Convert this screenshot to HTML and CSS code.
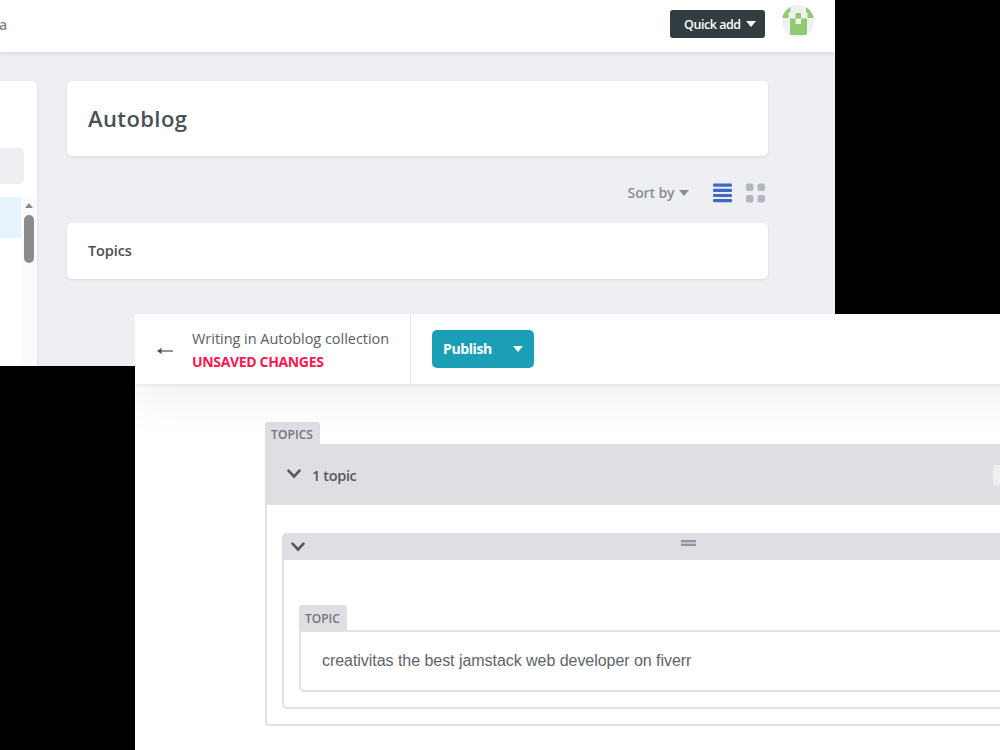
FILE: index.html
```
<!DOCTYPE html>
<html lang="en">
<head>
    <meta charset="UTF-8">
    <meta name="viewport" content="width=device-width, initial-scale=1.0">
    <title>Autoblog - Content Manager</title>
    <link rel="stylesheet" href="styles.css">
</head>
<body>
    <!-- Collection list window -->
    <div class="window collection-window">
        <header class="top-bar">
            <span class="nav-link">a</span>
            <button class="quick-add"><span class="quick-text">Quick add</span><i class="caret"></i></button>
            <svg class="avatar" width="32" height="32" viewBox="0 0 32 32">
                <clipPath id="round"><circle cx="16" cy="16" r="16"/></clipPath>
                <g clip-path="url(#round)">
                    <rect width="32" height="32" fill="#f0f0f0"/>
                    <path fill="#8fcc71" d="M0 2h8.500v5.500h-2v5.500H0zM24 2H32v11h-6.500V7.500H24zM13.500 8h5.500v5.500h6V30H8V13.500h5.500z"/>
                    <rect x="13.500" y="13.500" width="5.500" height="5.500" fill="#f0f0f0"/>
                </g>
            </svg>
        </header>
        <main class="collection-body">
            <aside class="sidebar">
                <div class="search"></div>
                <div class="side-list">
                    <div class="side-active"></div>
                    <div class="scrollbar">
                        <i class="scroll-up"></i>
                        <i class="scroll-thumb"></i>
                    </div>
                </div>
            </aside>
            <section class="entries">
                <div class="card title-card"><h1>Autoblog</h1></div>
                <div class="controls">
                    <span class="sort">Sort by</span><i class="caret sort-caret"></i>
                    <svg class="list-icon" width="19" height="20" viewBox="0 0 19 20" fill="#4268c5">
                        <rect y="0.500" width="19" height="3.200" rx="1"/>
                        <rect y="5.700" width="19" height="3.200" rx="1"/>
                        <rect y="10.900" width="19" height="3.200" rx="1"/>
                        <rect y="16.100" width="19" height="3.200" rx="1"/>
                    </svg>
                    <svg width="19" height="20" viewBox="0 0 19 20" fill="#b3b6c1">
                        <rect y="0.500" width="7.500" height="7.500" rx="2"/>
                        <rect x="11.500" y="0.500" width="7.500" height="7.500" rx="2"/>
                        <rect y="12" width="7.500" height="7.500" rx="2"/>
                        <rect x="11.500" y="12" width="7.500" height="7.500" rx="2"/>
                    </svg>
                </div>
                <div class="card entry-card"><h2>Topics</h2></div>
            </section>
        </main>
    </div>

    <!-- Entry editor window -->
    <div class="window editor-window">
        <header class="editor-bar">
            <a class="back">
                <svg class="back-arrow" width="16" height="10" viewBox="0 0 16 10">
                    <path d="M1.500 5H16" stroke="#53595d" stroke-width="1.300"/>
                    <path d="M0 5L5 1.700L4 5L5 8.300Z" fill="#43494d"/>
                </svg>
                <div>
                    <div class="writing">Writing in Autoblog collection</div>
                    <div class="unsaved">UNSAVED CHANGES</div>
                </div>
            </a>
            <button class="publish"><span class="publish-text">Publish</span><i class="caret"></i></button>
        </header>
        <main class="editor-body">
            <label class="field-label topics-label">TOPICS</label>
            <div class="list-field">
                <div class="list-bar">
                    <svg class="chevron" width="14" height="10" viewBox="0 0 14 10"><path d="M1.500 1.700L7 7.500L12.500 1.700"/></svg>
                    <span class="count">1 topic</span>
                    <span class="add-button"></span>
                </div>
                <div class="list-item">
                    <div class="item-bar">
                        <svg class="chevron" width="14" height="10" viewBox="0 0 14 10"><path d="M1.500 1.700L7 7.500L12.500 1.700"/></svg>
                        <i class="drag"></i>
                    </div>
                    <label class="field-label topic-label">TOPIC</label>
                    <div class="text-input"><span class="value">creativitas the best jamstack web developer on fiverr</span></div>
                </div>
            </div>
        </main>
    </div>
</body>
</html>
```
FILE: styles.css
```
* {
    box-sizing: border-box;
}
body {
    margin: 0;
    width: 1000px;
    height: 750px;
    position: relative;
    overflow: hidden;
    background: #000;
    font-family: "Open Sans", "Noto Sans", sans-serif;
    font-size: 14px;
    color: #4a5054;
}
h1, h2 {
    margin: 0;
}
button {
    border: none;
    font-family: inherit;
    color: #fff;
    display: flex;
    align-items: center;
    white-space: nowrap;
}
.window {
    position: absolute;
    overflow: hidden;
}
.caret {
    width: 0;
    height: 0;
    border: 5px solid transparent;
    border-top: 6px solid currentColor;
    border-bottom: 0;
}

/* Collection window */
.collection-window {
    left: 0;
    top: 0;
    width: 835px;
    height: 366px;
    background: #eeeff3;
}
.top-bar {
    height: 52px;
    padding-right: 21px;
    display: flex;
    align-items: flex-start;
    background: #fff;
    box-shadow: 0 1px 4px rgba(68, 74, 87, 0.16);
}
.nav-link {
    margin: 15px auto 0 -1px;
    font-weight: 600;
    color: #7f8590;
}
.quick-add {
    width: 95px;
    height: 28px;
    margin-top: 10px;
    padding: 0 0 0 14px;
    border-radius: 3px;
    background: #313d3e;
    font-size: 12.500px;
    font-weight: 600;
    gap: 5px;
}
.quick-text {
    letter-spacing: -0.450px;
}
.avatar {
    margin: 5px 0 0 17px;
}
.collection-body {
    display: flex;
    gap: 30.500px;
    padding-top: 29px;
}
.sidebar {
    width: 36.500px;
    height: 400px;
    padding-top: 67px;
    background: #fff;
    border-radius: 0 5px 0 0;
    box-shadow: 0 1px 3px rgba(68, 74, 87, 0.12);
}
.search {
    width: 24px;
    height: 36px;
    border-radius: 0 5px 5px 0;
    background: #eeeff3;
}
.side-list {
    display: flex;
    height: 240px;
    margin-top: 13px;
}
.side-active {
    width: 21px;
    height: 41px;
    background: #e6f3fd;
}
.scrollbar {
    flex: 1;
    display: flex;
    flex-direction: column;
    align-items: center;
    padding-top: 6px;
    background: #fbfbfb;
}
.scroll-up {
    border: 4.500px solid transparent;
    border-bottom: 5px solid #8a8a8a;
    border-top: 0;
}
.scroll-thumb {
    width: 10px;
    height: 48px;
    margin-top: 7px;
    border-radius: 5px;
    background: #8b8b8b;
}
.entries {
    width: 701px;
}
.card {
    display: flex;
    align-items: center;
    padding-left: 21px;
    background: #fff;
    border-radius: 5px;
    box-shadow: 0 1px 3px rgba(68, 74, 87, 0.13);
}
.title-card {
    height: 74.500px;
}
.title-card h1 {
    font-size: 22px;
    font-weight: 600;
    letter-spacing: 0.400px;
}
.controls {
    height: 67px;
    padding: 7px 3.500px 0 0;
    display: flex;
    align-items: center;
    justify-content: flex-end;
    color: #8a8d96;
}
.sort {
    font-size: 14px;
    font-weight: 600;
    letter-spacing: -0.100px;
}
.sort-caret {
    margin-left: 4px;
}
.list-icon {
    margin: 0 14px 0 24px;
}
.entry-card {
    height: 56.500px;
}
.entry-card h2 {
    font-size: 14.500px;
    font-weight: 600;
    letter-spacing: -0.100px;
}

/* Editor window */
.editor-window {
    left: 134.5px;
    top: 314px;
    width: 866px;
    height: 436px;
    background: #fff;
}
.editor-bar {
    position: relative;
    width: 930px;
    height: 69.500px;
    display: flex;
    align-items: center;
    background: #fff;
    box-shadow: 0 1px 3px rgba(40, 40, 40, 0.1), 0 18px 45px 0 rgba(0, 0, 0, 0.06);
}
.back {
    width: 276.500px;
    height: 100%;
    padding-left: 22.500px;
    display: flex;
    align-items: center;
    border-right: 1px solid #e6e6e9;
    white-space: nowrap;
}
.back-arrow {
    margin: 4px 19px 0 0;
}
.writing {
    line-height: 23px;
    padding-top: 2px;
    font-size: 14.500px;
    letter-spacing: -0.030px;
    color: #596066;
}
.unsaved {
    line-height: 23px;
    font-size: 14px;
    font-weight: 700;
    color: #fb1750;
    letter-spacing: -0.340px;
}
.publish {
    width: 102px;
    height: 38px;
    margin-left: 21px;
    padding: 0 11px 0 11px;
    justify-content: space-between;
    border-radius: 5px;
    background: #1a9fb6;
    font-size: 14px;
    font-weight: 700;
}
.publish-text {
    letter-spacing: -0.400px;
}
.editor-body {
    padding: 38.500px 0 0 130.500px;
}
.field-label {
    display: flex;
    align-items: center;
    padding: 1px 0 0 6px;
    border-radius: 3px 3px 0 0;
    background: #dfdee3;
    color: #73757f;
    font-size: 12px;
    font-weight: 600;
}
.topics-label {
    width: 54.500px;
    height: 23px;
    letter-spacing: 0.100px;
}
.list-field {
    width: 800px;
    height: 281.500px;
    margin-top: -1px;
    border: 2px solid #e2e2e5;
    border-top: 0;
    border-radius: 0 0 4px 4px;
}
.list-bar {
    height: 61px;
    margin-left: -2px;
    padding-left: 22px;
    display: flex;
    align-items: center;
    background: #dfdee3;
}
.chevron {
    fill: none;
    stroke: #555963;
    stroke-width: 2.600;
    stroke-linecap: round;
}
.list-bar .chevron {
    margin-top: -2px;
}
.count {
    width: 681px;
    margin: 2px 0 0 11px;
    font-size: 14.500px;
    font-weight: 600;
    letter-spacing: -0.350px;
    color: #555963;
}
.add-button {
    width: 30px;
    height: 21px;
    margin-top: 2px;
    border-radius: 3px;
    background: #efeff1;
}
.list-item {
    width: 780px;
    height: 176px;
    margin: 28px 0 0 15px;
    border: 2px solid #e2e2e5;
    border-top: 0;
    border-radius: 5px;
}
.item-bar {
    height: 27px;
    margin-left: -2px;
    padding-left: 9px;
    display: flex;
    align-items: center;
    border-radius: 5px 0 0 0;
    background: #dfdee3;
}
.drag {
    width: 15px;
    height: 6px;
    margin: -8px 0 0 376px;
    border: solid #96979e;
    border-width: 2px 0;
    background: #c3c3c9;
}
.topic-label {
    width: 47.500px;
    height: 25px;
    margin: 45px 0 0 15px;
}
.text-input {
    width: 760px;
    height: 62px;
    margin: 0 0 0 15px;
    padding-left: 21px;
    display: flex;
    align-items: center;
    border: 2px solid #e2e2e5;
    border-radius: 0 0 0 5px;
}
.value {
    font-family: "Liberation Sans", Arial, sans-serif;
    font-size: 16px;
    letter-spacing: -0.045px;
    color: #5e646d;
    white-space: nowrap;
}
```
